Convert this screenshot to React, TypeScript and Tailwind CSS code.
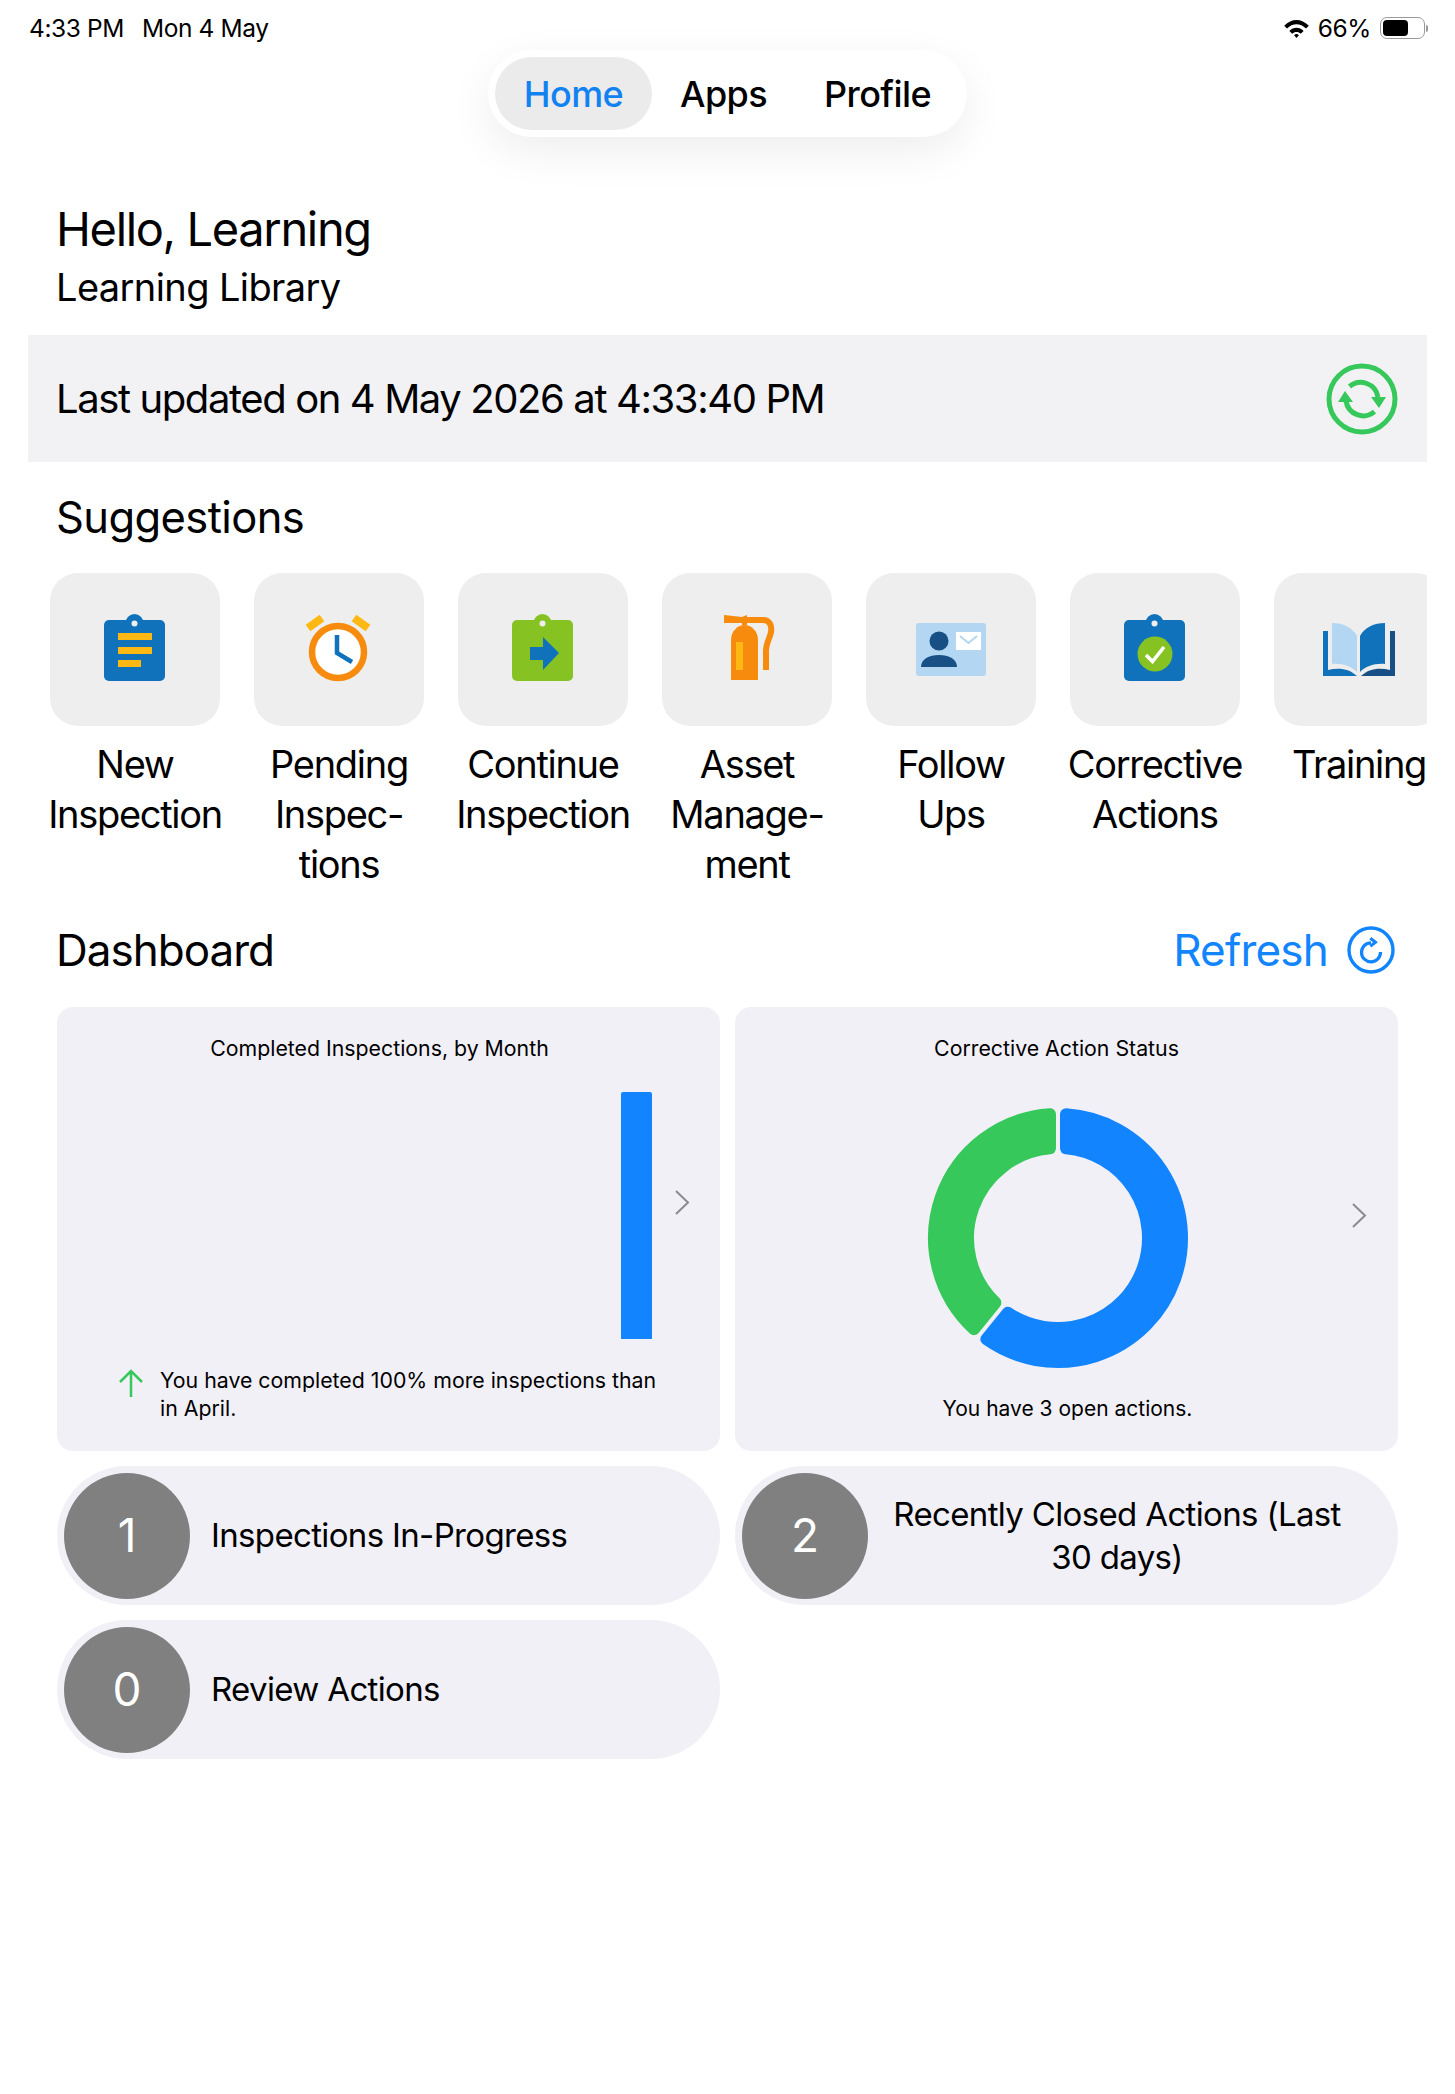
const FONT = "font-['Inter','Noto_Sans',sans-serif]";

function Clipboard({ color }: { color: string }) {
  return (
    <>
      <circle cx="39.5" cy="13" r="9" fill={color} />
      <rect x="9" y="10" width="61" height="61" rx="5" fill={color} />
      <circle cx="39.5" cy="13.5" r="3" fill="#eeeeee" />
    </>
  );
}

function NewInspectionIcon() {
  return (
    <svg viewBox="0 0 80 80" className="w-20 h-20">
      <Clipboard color="#0f72ba" />
      <rect x="23" y="23" width="34" height="7" fill="#fdb813" />
      <rect x="23" y="37" width="34" height="7" fill="#fdb813" />
      <rect x="23" y="50" width="23" height="7" fill="#fdb813" />
    </svg>
  );
}

function PendingIcon() {
  return (
    <svg viewBox="0 0 80 80" className="w-20 h-20">
      <path d="M9 18 23 8M55 8 69 18" stroke="#fdb813" strokeWidth="8" fill="none" />
      <circle cx="39" cy="42" r="26" fill="#fff" stroke="#f68b0d" strokeWidth="6.5" />
      <path d="M38 25V43L53 52" stroke="#0f72ba" strokeWidth="4.5" fill="none" />
    </svg>
  );
}

function ContinueIcon() {
  return (
    <svg viewBox="0 0 80 80" className="w-20 h-20">
      <Clipboard color="#86c322" />
      <polygon points="27,37 40,37 40,27 56,43 40,60 40,50 27,50" fill="#0f72ba" />
    </svg>
  );
}

function AssetIcon() {
  return (
    <svg viewBox="0 0 80 80" className="w-20 h-20">
      <path d="M24 70V30C24 21 31 15 37.5 15C44 15 51 21 51 30V70Z" fill="#f68b0d" />
      <rect x="29" y="32" width="7" height="28" fill="#fdb813" />
      <polygon points="17,5 35,7 40,5 40,15 35,15 35,13 17,13" fill="#f68b0d" />
      <path d="M40 10H56C63 10 65 16 64 22C63 28 59 33 59 41V60" stroke="#f68b0d" strokeWidth="6" fill="none" />
    </svg>
  );
}

function FollowUpIcon() {
  return (
    <svg viewBox="0 0 80 80" className="w-20 h-20">
      <rect x="5" y="13" width="70" height="53" rx="3" fill="#b3d6f2" />
      <circle cx="28" cy="31" r="9.5" fill="#184f85" />
      <path d="M10 57C10 49 18 45 28 45C38 45 46 49 46 57Z" fill="#184f85" />
      <rect x="45" y="22" width="25" height="18" fill="#fff" />
      <path d="M49 26 57.5 33 66 26" stroke="#b3d6f2" strokeWidth="2" fill="none" />
    </svg>
  );
}

function CorrectiveIcon() {
  return (
    <svg viewBox="0 0 80 80" className="w-20 h-20">
      <Clipboard color="#0f72ba" />
      <circle cx="40" cy="44" r="17.5" fill="#86c322" />
      <path d="M31 45 37.5 51.5 49 37" stroke="#fff" strokeWidth="3.5" fill="none" />
    </svg>
  );
}

function TrainingIcon() {
  return (
    <svg viewBox="0 0 80 80" className="w-20 h-20">
      <path d="M4 21H9V60C20 57 31 59 38 66H4Z" fill="#0f72ba" />
      <path d="M76 21H71V60C60 57 49 59 42 66H76Z" fill="#184f85" />
      <path d="M13 13C24 13 33 17 38 26V62C32 56 23 53 13 54Z" fill="#b3d6f2" />
      <path d="M66 13C55 13 46 17 41 26V62C47 56 56 53 66 54Z" fill="#0f72ba" />
    </svg>
  );
}

const suggestions = [
  { icon: <NewInspectionIcon />, lines: ['New', 'Inspection'] },
  { icon: <PendingIcon />, lines: ['Pending', 'Inspec-', 'tions'] },
  { icon: <ContinueIcon />, lines: ['Continue', 'Inspection'] },
  { icon: <AssetIcon />, lines: ['Asset', 'Manage-', 'ment'] },
  { icon: <FollowUpIcon />, lines: ['Follow', 'Ups'] },
  { icon: <CorrectiveIcon />, lines: ['Corrective', 'Actions'] },
  { icon: <TrainingIcon />, lines: ['Training'] },
];

// ring segment with a fixed-width gap at each end; angles are degrees clockwise from the top
function ringSegment(a0: number, a1: number, r0: number, r1: number, inset: number) {
  const pt = (r: number, a: number) => {
    const t = (a * Math.PI) / 180;
    return `${(r * Math.sin(t)).toFixed(2)} ${(-r * Math.cos(t)).toFixed(2)}`;
  };
  const off = (r: number) => (Math.asin(inset / r) * 180) / Math.PI;
  const large = a1 - a0 > 180 ? 1 : 0;
  return `M${pt(r1, a0 + off(r1))}A${r1} ${r1} 0 ${large} 1 ${pt(r1, a1 - off(r1))}L${pt(r0, a1 - off(r0))}A${r0} ${r0} 0 ${large} 0 ${pt(r0, a0 + off(r0))}Z`;
}

function Donut() {
  return (
    <svg viewBox="-135 -135 270 270" className="w-[270px] h-[270px]">
      <path d={ringSegment(0, 219, 90, 124, 8)} fill="#1285fe" stroke="#1285fe" strokeWidth="12" strokeLinejoin="round" />
      <path d={ringSegment(219, 360, 90, 124, 8)} fill="#37c85c" stroke="#37c85c" strokeWidth="12" strokeLinejoin="round" />
    </svg>
  );
}

function Chevron({ className }: { className: string }) {
  return (
    <svg viewBox="0 0 16 27" className={`w-[16px] h-[27px] shrink-0 ${className}`}>
      <path d="M2 2 14 13.5 2 25" fill="none" stroke="#8b8b8f" strokeWidth="2" />
    </svg>
  );
}

function CountPill({ count, label, center }: { count: number; label: string; center?: boolean }) {
  return (
    <div className={`h-[139px] rounded-[70px] bg-[#f2f0f7] flex items-center pl-[7px] ${center ? 'pr-[53px]' : 'pr-[40px]'}`}>
      <div className="w-[126px] h-[126px] rounded-full bg-[#808080] text-white text-[46px] flex items-center justify-center shrink-0">
        {count}
      </div>
      <div className={`flex-1 pl-[21px] text-[33px] leading-[43px] tracking-[-0.65px] text-black ${center ? 'text-center' : ''}`}>{label}</div>
    </div>
  );
}

export default function App() {
  return (
    <div className={`min-h-screen bg-white text-black ${FONT}`}>
      {/* status bar */}
      <div className="h-[50px] flex items-center justify-between pl-[29px] pr-[27px] pt-[6px] text-[24.5px] tracking-[-0.4px]">
        <div className="flex gap-[18px]">
          <span>4:33 PM</span>
          <span>Mon 4 May</span>
        </div>
        <div className="flex items-center">
          <svg viewBox="0 0 28 20" className="w-[27px] h-[19px] mr-[8px]">
            <path d="M1 7C9 -1 19 -1 27 7L24 10C18 4 10 4 4 10Z" fill="#000" />
            <path d="M6.5 12.5C11 8 17 8 21.5 12.5L18.5 15.5C16 13 12 13 9.5 15.5Z" fill="#000" />
            <path d="M11.5 17C13 15.5 15 15.5 16.5 17L14 20Z" fill="#000" />
          </svg>
          <span>66%</span>
          <div className="ml-[9px] flex items-center">
            <div className="w-[45px] h-[22px] rounded-[7px] border-[1.5px] border-[#9a9a9a] p-[2px]">
              <div className="h-full w-[25px] rounded-[4px] bg-black" />
            </div>
            <div className="ml-[1px] w-[2px] h-[7px] bg-[#9a9a9a] rounded-r-sm" />
          </div>
        </div>
      </div>

      {/* tabs */}
      <div className="flex justify-center">
        <div className="w-[479px] h-[87px] rounded-[44px] bg-white shadow-[0_14px_44px_rgba(0,0,0,0.07)] flex items-center pl-[7px] text-[36px] font-medium tracking-[-0.6px]">
          <div className="w-[157px] h-[73px] rounded-[37px] bg-[#ebebeb] text-[#1282f0] flex items-center justify-center">Home</div>
          <div className="ml-[28px]">Apps</div>
          <div className="ml-[57px]">Profile</div>
        </div>
      </div>

      {/* greeting */}
      <div className="pl-[56px] pt-[64px] pb-[21px]">
        <div className="text-[47px] leading-[56px] tracking-[-1.35px]">Hello, Learning</div>
        <div className="mt-[3px] text-[38px] leading-[54px] tracking-[-0.6px]">Learning Library</div>
      </div>

      <div className="mx-[28px] h-[127px] bg-[#f2f2f4] flex items-center justify-between pl-[28px] pr-[29px]">
        <span className="text-[40px] tracking-[-1.4px]">Last updated on 4 May 2026 at 4:33:40 PM</span>
        <svg viewBox="0 0 72 72" className="w-[72px] h-[72px]">
          <circle cx="36" cy="36" r="33" fill="none" stroke="#37c85c" strokeWidth="5" />
          <path d="M23.5 23.5A17.5 17.5 0 0 1 52 34" fill="none" stroke="#37c85c" strokeWidth="5" />
          <path d="M48.5 48.7A17.5 17.5 0 0 1 20 38" fill="none" stroke="#37c85c" strokeWidth="5" />
          <polygon points="45,34 60,34 53,45" fill="#37c85c" />
          <polygon points="12,39 27,39 19,28" fill="#37c85c" />
        </svg>
      </div>

      {/* suggestions */}
      <div className="pl-[56px] pt-[28px] text-[43.5px] leading-[54px] tracking-[-0.6px]">Suggestions</div>
      <div className="mx-[28px] mt-[29px] pl-[5px] flex overflow-hidden">
        {suggestions.map((s) => (
          <div key={s.lines[0]} className="w-[204px] shrink-0 flex flex-col items-center">
            <div className="w-[170px] h-[153px] rounded-[28px] bg-[#eeeeee] flex items-center justify-center">{s.icon}</div>
            <div className="mt-[13px] text-[38px] leading-[50px] tracking-[-1.3px] text-center h-[150px]">
              {s.lines.map((l) => (
                <div key={l}>{l}</div>
              ))}
            </div>
          </div>
        ))}
      </div>

      {/* dashboard */}
      <div className="mt-[34px] pl-[56px] pr-[60px] flex items-center justify-between">
        <div className="text-[44px] leading-[54px] tracking-[-1px]">Dashboard</div>
        <div className="flex items-center text-[#1285fe] text-[44px] leading-[54px] tracking-[-0.8px]">
          Refresh
          <svg viewBox="0 0 48 48" className="w-[48px] h-[48px] ml-[19px]">
            <circle cx="24" cy="24" r="22" fill="none" stroke="#1285fe" strokeWidth="3.4" />
            <path d="M24 16.8A9.5 9.5 0 1 0 33.5 26" fill="none" stroke="#1285fe" strokeWidth="3.2" />
            <path d="M23.3 12.3 28.5 16.3 23.3 20.3" fill="none" stroke="#1285fe" strokeWidth="3" />
          </svg>
        </div>
      </div>

      <div className="mt-[30px] mx-[57px] grid grid-cols-2 gap-[15px]">
        <div className="h-[444px] rounded-[16px] bg-[#f2f0f7] flex flex-col">
          <div className="mt-[28px] pr-[18px] text-center text-[21.3px] leading-[27px]">Completed Inspections, by Month</div>
          <div className="mt-[30px] h-[247px] flex justify-end items-center pr-[30px]">
            <div className="w-[31px] h-[247px] bg-[#1285fe] rounded-t-[2px]" />
            <Chevron className="ml-[22px] -mt-[27px]" />
          </div>
          <div className="mt-[27px] flex pl-[61px] pr-[60px]">
            <svg viewBox="0 0 26 30" className="w-[26px] h-[30px] shrink-0 mt-[2px]">
              <path d="M13 29V3M2 14 13 3 24 14" fill="none" stroke="#37c85c" strokeWidth="2.5" />
            </svg>
            <div className="ml-[16px] text-[21.3px] leading-[28px]">You have completed 100% more inspections than in April.</div>
          </div>
        </div>

        <div className="h-[444px] rounded-[16px] bg-[#f2f0f7] flex flex-col">
          <div className="mt-[28px] pr-[20px] text-center text-[21.3px] leading-[27px]">Corrective Action Status</div>
          <div className="mt-[41px] flex items-center pl-[188px]">
            <Donut />
            <Chevron className="ml-[158px] -mt-[46px]" />
          </div>
          <div className="mt-[22px] pl-[2px] text-center text-[21px] leading-[28px]">You have 3 open actions.</div>
        </div>

        <CountPill count={1} label="Inspections In-Progress" />
        <CountPill count={2} label="Recently Closed Actions (Last 30 days)" center />
        <CountPill count={0} label="Review Actions" />
      </div>
    </div>
  );
}
